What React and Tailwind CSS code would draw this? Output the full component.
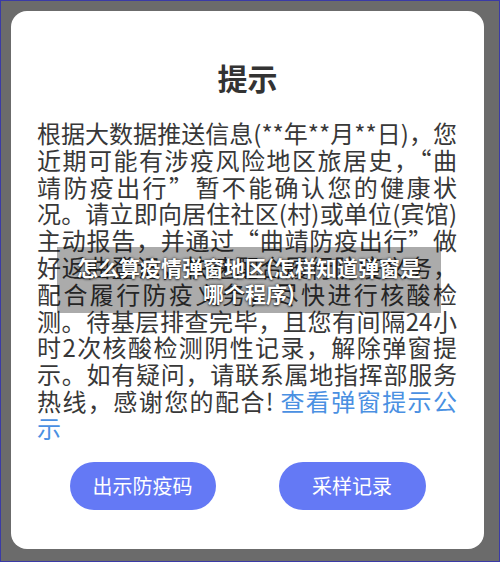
export default function App() {
  const lines = [
    "根据大数据推送信息(**年**月**日)，您",
    "近期可能有涉疫风险地区旅居史，“曲",
    "靖防疫出行”暂不能确认您的健康状",
    "况。请立即向居住社区(村)或单位(宾馆)",
    "主动报告，并通过“曲靖防疫出行”做",
    "好返曲登记，快速配合履行防疫义务，",
    "配合履行防疫义务，尽快进行核酸检",
    "测。待基层排查完毕，且您有间隔24小",
    "时2次核酸检测阴性记录，解除弹窗提",
    "示。如有疑问，请联系属地指挥部服务",
  ];
  const font = { fontFamily: '"Noto Sans CJK SC", "Noto Sans", sans-serif' };
  return (
    <div
      className="relative w-[500px] h-[562px] bg-[#6b6b6b] border border-[#3a3aa6] p-[10px] box-border"
      style={font}
    >
      <div className="h-[538px] w-[473px] bg-white rounded-[16px] flex flex-col items-center pt-[46px]">
        <div className="text-[30px] leading-[40px] font-bold text-[#333333]">提示</div>
        <div className="mt-[23px] w-[420px] self-start ml-[26px] text-[24px] leading-[26.8px] text-[#383838]">
          {lines.map((l, i) => (
            <div key={i} className="[text-align-last:justify] whitespace-nowrap">
              {l}
            </div>
          ))}
          <div className="[text-align-last:justify] whitespace-nowrap">
            热线，感谢您的配合! <span className="text-[#4a90e2]">查看弹窗提示公</span>
          </div>
          <div className="text-[#4a90e2]">示</div>
        </div>
        <div className="mt-[20px] flex gap-[63px]">
          <div className="w-[146px] h-[48px] rounded-full bg-[#6479f5] text-white text-[20px] flex items-center justify-center">
            出示防疫码
          </div>
          <div className="w-[147px] h-[48px] rounded-full bg-[#6479f5] text-white text-[20px] flex items-center justify-center">
            采样记录
          </div>
        </div>
      </div>
      <div className="absolute left-[56px] top-[246px] w-[384px] h-[66px] bg-[rgba(0,0,0,0.33)] flex flex-col items-center justify-center text-white font-bold text-[21px] leading-[26px] [text-shadow:0_0_3px_rgba(0,0,0,0.8),0_1px_2px_rgba(0,0,0,0.6)]">
        <div>怎么算疫情弹窗地区(怎样知道弹窗是</div>
        <div>哪个程序)</div>
      </div>
    </div>
  );
}
